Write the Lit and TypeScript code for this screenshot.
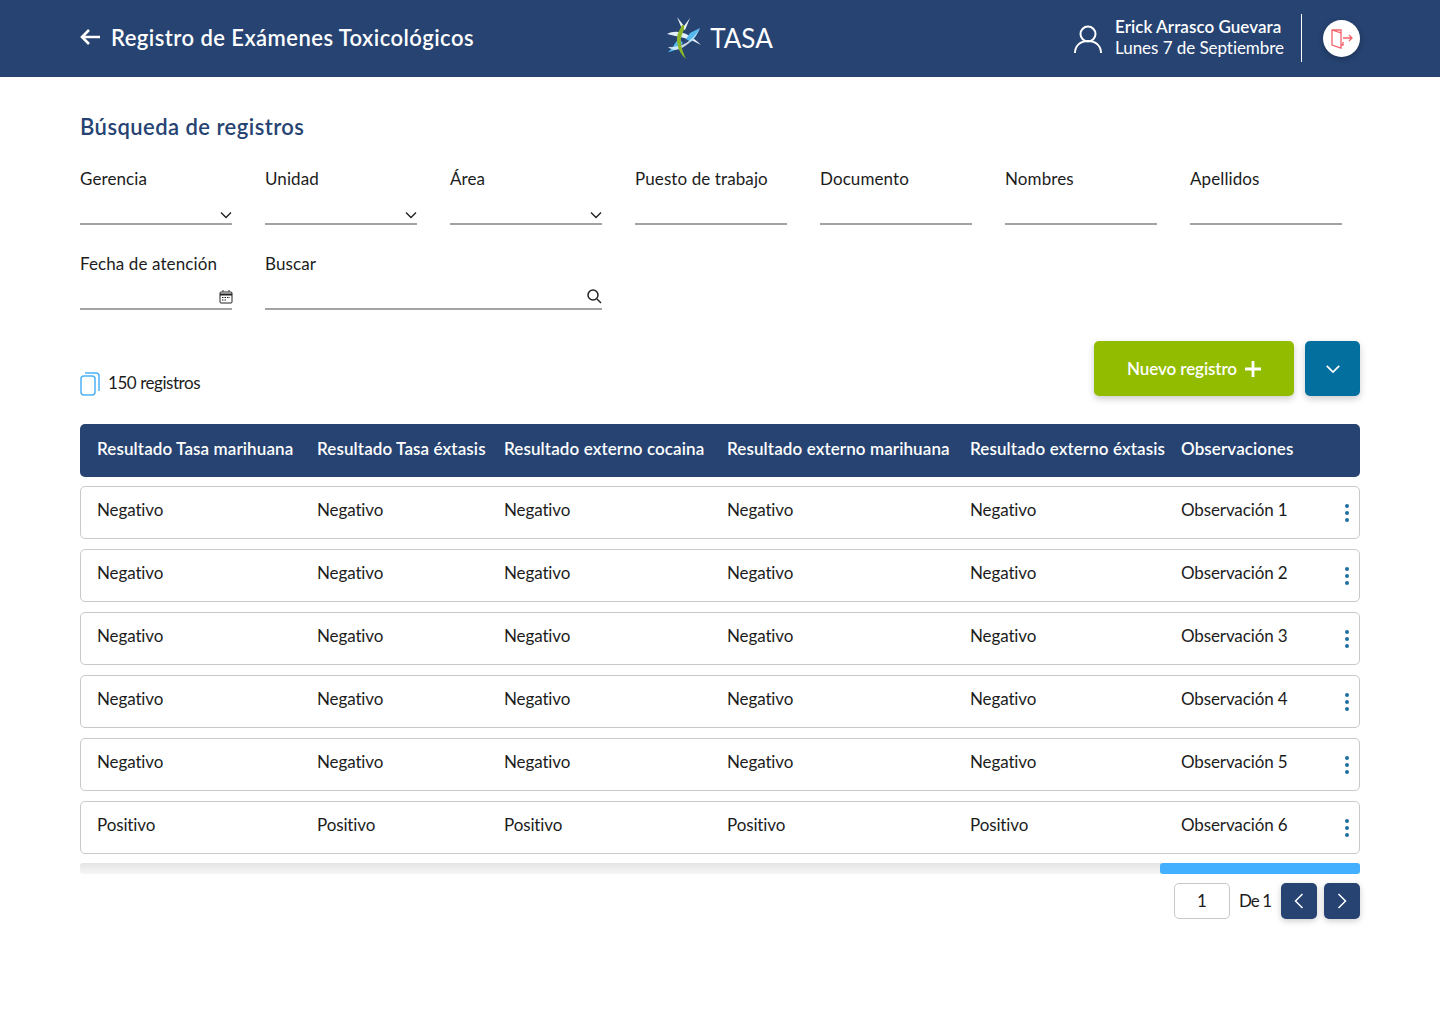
import { LitElement, html, css, svg } from 'lit';
import { customElement } from 'lit/decorators.js';

const chevronDown = svg`<path d="M1 1.500l5 5 5-5" fill="none" stroke="currentColor" stroke-width="1.400"/>`;

interface Row {
  result: string;
  note: string;
}

const ROWS: Row[] = [
  { result: 'Negativo', note: 'Observación 1' },
  { result: 'Negativo', note: 'Observación 2' },
  { result: 'Negativo', note: 'Observación 3' },
  { result: 'Negativo', note: 'Observación 4' },
  { result: 'Negativo', note: 'Observación 5' },
  { result: 'Positivo', note: 'Observación 6' },
];

const HEADERS = [
  'Resultado Tasa marihuana',
  'Resultado Tasa éxtasis',
  'Resultado externo cocaina',
  'Resultado externo marihuana',
  'Resultado externo éxtasis',
  'Observaciones',
];

@customElement('app-root')
export class AppRoot extends LitElement {
  static styles = css`
    :host {
      display: block;
      min-height: 1024px;
      background: #fff;
      color: #1c1c1c;
      font-family: 'Lato', 'Liberation Sans', sans-serif;
      font-size: 17px;
    }
    .topbar {
      height: 77px;
      box-sizing: border-box;
      padding: 0 80px;
      background: #264372;
      color: #fff;
      display: grid;
      grid-template-columns: 1fr auto 1fr;
      align-items: center;
    }
    .page-title {
      display: flex;
      align-items: center;
      gap: 11px;
      margin-bottom: 3px;
      font-size: 22px;
      font-weight: 600;
      letter-spacing: 0.45px;
      white-space: nowrap;
    }
    .logo {
      display: flex;
      align-items: center;
      gap: 3px;
      margin: 0 2px 2px 0;
      font-size: 26px;
    }
    .user {
      display: flex;
      align-items: center;
      justify-content: flex-end;
    }
    .user-text {
      margin: 0 0 4px 12px;
      font-size: 17px;
      line-height: 21px;
      letter-spacing: -0.05px;
      white-space: nowrap;
    }
    .user-name {
      font-weight: 600;
      letter-spacing: 0.05px;
    }
    .divider {
      width: 1px;
      height: 48px;
      margin: 0 21px 1px 17px;
      background: #fff;
    }
    .logout {
      width: 37px;
      height: 37px;
      border-radius: 50%;
      background: #fff;
      box-shadow: 0 2px 6px rgba(0, 0, 0, 0.25);
      display: flex;
      align-items: center;
      justify-content: center;
    }
    main {
      padding: 37px 80px 0;
    }
    h2 {
      margin: 0;
      font-size: 22px;
      line-height: 26px;
      font-weight: 600;
      letter-spacing: 0.45px;
      color: #264372;
    }
    .filters {
      margin-top: 27px;
      display: grid;
      grid-template-columns: repeat(7, 152px);
      column-gap: 33px;
      row-gap: 27px;
    }
    .field {
      height: 58px;
      display: flex;
      flex-direction: column;
      justify-content: space-between;
    }
    .field label {
      margin-top: 1px;
      line-height: 22px;
      letter-spacing: 0.1px;
      white-space: nowrap;
    }
    .search {
      grid-column: span 2;
    }
    .control {
      height: 24px;
      box-sizing: border-box;
      border-bottom: 2px solid #a3a3a3;
      display: flex;
      justify-content: flex-end;
      align-items: center;
      color: #222;
    }
    .select-icon {
      margin: 5px 0 0;
    }
    .date-icon {
      margin-right: -1px;
    }
    .search-icon {
      margin-bottom: 2px;
    }
    .toolbar {
      margin-top: 31px;
      height: 55px;
      display: flex;
      align-items: flex-start;
      justify-content: space-between;
    }
    .count {
      display: flex;
      align-items: center;
      gap: 8px;
      margin-top: 29px;
      height: 24px;
      letter-spacing: -0.45px;
    }
    .count svg {
      margin-top: 4px;
    }
    .actions {
      display: flex;
      gap: 11px;
    }
    .btn {
      height: 55px;
      border-radius: 5px;
      color: #fff;
      display: flex;
      align-items: center;
      justify-content: center;
      box-shadow: 0 3px 7px rgba(0, 0, 0, 0.2);
    }
    .btn-new {
      width: 200px;
      gap: 8px;
      background: #92bc00;
      font-weight: 600;
      letter-spacing: -0.1px;
    }
    .btn-more {
      width: 55px;
      background: #026f9e;
    }
    .thead,
    .row {
      display: grid;
      grid-template-columns: 220px 187px 223px 243px 211px 1fr;
      box-sizing: border-box;
      white-space: nowrap;
    }
    .thead {
      margin-top: 28px;
      height: 53px;
      align-items: center;
      padding: 0 0 4px 17px;
      border-radius: 5px;
      background: #264372;
      color: #fff;
      font-weight: 600;
      letter-spacing: 0.1px;
    }
    .rows {
      margin-top: 9px;
      display: flex;
      flex-direction: column;
      gap: 10px;
    }
    .row {
      position: relative;
      height: 53px;
      padding: 12px 0 0 16px;
      line-height: 22px;
      letter-spacing: -0.12px;
      border: 1px solid #c9c9c9;
      border-radius: 5px;
    }
    .dots {
      position: absolute;
      right: 10px;
      top: 17px;
      display: flex;
      flex-direction: column;
      gap: 3px;
    }
    .dots span {
      width: 4px;
      height: 4px;
      border-radius: 50%;
      background: #1f6f9f;
    }
    .track {
      margin-top: 9px;
      height: 11px;
      border-radius: 3px;
      background: linear-gradient(#e4e4e4, #f6f6f6);
      display: flex;
      justify-content: flex-end;
    }
    .thumb {
      width: 200px;
      border-radius: 3px;
      background: #42b0ff;
    }
    .pager {
      margin-top: 9px;
      display: flex;
      justify-content: flex-end;
      align-items: center;
    }
    .page-input {
      width: 56px;
      height: 36px;
      padding-bottom: 2px;
      box-sizing: border-box;
      border: 1px solid #c9c9c9;
      border-radius: 5px;
      display: flex;
      align-items: center;
      justify-content: center;
    }
    .page-of {
      margin: 0 10px 2px 9px;
      letter-spacing: -1px;
    }
    .page-btn {
      width: 36px;
      height: 36px;
      border-radius: 5px;
      background: #264372;
      color: #fff;
      display: flex;
      align-items: center;
      justify-content: center;
      box-shadow: 0 2px 6px rgba(0, 0, 0, 0.2);
    }
    .page-btn + .page-btn {
      margin-left: 7px;
    }
  `;

  private _select(name: string) {
    return html`<div class="field">
      <label>${name}</label>
      <div class="control">
        <svg class="select-icon" width="12" height="8" viewBox="0 0 12 8">${chevronDown}</svg>
      </div>
    </div>`;
  }

  private _input(name: string) {
    return html`<div class="field">
      <label>${name}</label>
      <div class="control"></div>
    </div>`;
  }

  // drawn against a 48px crop of the original mark
  private _logo() {
    return html`<svg width="42" height="42" viewBox="4 3 42 42">
      <path d="M6 20c10-6 24 0 34 11-11-6-17-7-21-8-5-1-9-2-13-3z" fill="#e4eef6"/>
      <path d="M39 14l-10 5-4 6 5 3c4-4 7-9 9-14z" fill="#56b9ee"/>
      <path d="M7 38c5 0 11-4 15-9l-4-4c-3 3-5 5-6 8-1 2-3 3-5 5z" fill="#56b9ee"/>
      <path d="M7 33c11 1 24-4 32-19-5 12-15 20-24 22-3 0-6-1-8-3z" fill="#e4eef6" opacity="0.85"/>
      <path d="M16 3l7 9 6-8-5 12-3-1z" fill="#eef3f7"/>
      <path d="M23 11c1 5-2 8-3 13-1 7 2 14 5 21-6-5-9-12-9-20 0-6 3-9 5-14z" fill="#8db52a"/>
    </svg>`;
  }

  protected render() {
    return html`
      <header class="topbar">
        <div class="page-title">
          <svg width="20" height="16" viewBox="0 0 20 16">
            <path d="M20 8H2M9 1L2 8l7 7" fill="none" stroke="#fff" stroke-width="2.600"/>
          </svg>
          Registro de Exámenes Toxicológicos
        </div>
        <div class="logo">${this._logo()}<span>TASA</span></div>
        <div class="user">
          <svg width="30" height="30" viewBox="0 0 30 30">
            <circle cx="15" cy="10" r="7.500" fill="none" stroke="#fff" stroke-width="2"/>
            <path d="M2 29c0-7 5-12 13-12s13 5 13 12" fill="none" stroke="#fff" stroke-width="2"/>
          </svg>
          <div class="user-text">
            <div class="user-name">Erick Arrasco Guevara</div>
            <div>Lunes 7 de Septiembre</div>
          </div>
          <div class="divider"></div>
          <div class="logout">
            <svg width="22" height="20" viewBox="0 0 22 20" fill="none" stroke="#f4606a" stroke-width="1.300">
              <path d="M10 4V1H1v15l9 3V4L1 1M10 16h2v-3M12 9h9M18 6l3 3-3 3"/>
            </svg>
          </div>
        </div>
      </header>
      <main>
        <h2>Búsqueda de registros</h2>
        <div class="filters">
          ${this._select('Gerencia')}
          ${this._select('Unidad')}
          ${this._select('Área')}
          ${this._input('Puesto de trabajo')}
          ${this._input('Documento')}
          ${this._input('Nombres')}
          ${this._input('Apellidos')}
          <div class="field">
            <label>Fecha de atención</label>
            <div class="control">
              <svg class="date-icon" width="14" height="14" viewBox="0 0 14 14" fill="none" stroke="currentColor">
                <rect x="1" y="2" width="12" height="11" rx="1"/>
                <path d="M1 4.500h12" stroke-width="2"/>
                <path d="M4 0v2M10 0v2M3 7.500h8M3 10h5" stroke-dasharray="1.500 1"/>
              </svg>
            </div>
          </div>
          <div class="field search">
            <label>Buscar</label>
            <div class="control">
              <svg class="search-icon" width="16" height="16" viewBox="0 0 16 16" fill="none" stroke="currentColor" stroke-width="1.500">
                <circle cx="7" cy="7" r="5"/>
                <path d="M11 11l4 4"/>
              </svg>
            </div>
          </div>
        </div>
        <div class="toolbar">
          <div class="count">
            <svg width="20" height="24" viewBox="0 0 20 24" fill="none" stroke="#4db2f5" stroke-width="1.500">
              <rect x="1" y="4" width="14" height="19" rx="3"/>
              <path d="M5 1h11a3 3 0 0 1 3 3v15"/>
            </svg>
            150 registros
          </div>
          <div class="actions">
            <div class="btn btn-new">
              Nuevo registro
              <svg width="16" height="16" viewBox="0 0 16 16">
                <path d="M8 0v16M0 8h16" stroke="#fff" stroke-width="2.800"/>
              </svg>
            </div>
            <div class="btn btn-more">
              <svg width="16" height="10" viewBox="0 0 12 8">${chevronDown}</svg>
            </div>
          </div>
        </div>
        <div class="thead">${HEADERS.map((h) => html`<div>${h}</div>`)}</div>
        <div class="rows">
          ${ROWS.map(
            (r) => html`<div class="row">
              <div>${r.result}</div>
              <div>${r.result}</div>
              <div>${r.result}</div>
              <div>${r.result}</div>
              <div>${r.result}</div>
              <div>${r.note}</div>
              <div class="dots"><span></span><span></span><span></span></div>
            </div>`
          )}
        </div>
        <div class="track"><div class="thumb"></div></div>
        <div class="pager">
          <div class="page-input">1</div>
          <div class="page-of">De 1</div>
          <div class="page-btn">
            <svg width="10" height="16" viewBox="0 0 10 16"><path d="M8.500 1L1.500 8l7 7" fill="none" stroke="#fff" stroke-width="1.500"/></svg>
          </div>
          <div class="page-btn">
            <svg width="10" height="16" viewBox="0 0 10 16"><path d="M1.500 1l7 7-7 7" fill="none" stroke="#fff" stroke-width="1.500"/></svg>
          </div>
        </div>
      </main>
    `;
  }
}

declare global {
  interface HTMLElementTagNameMap {
    'app-root': AppRoot;
  }
}
